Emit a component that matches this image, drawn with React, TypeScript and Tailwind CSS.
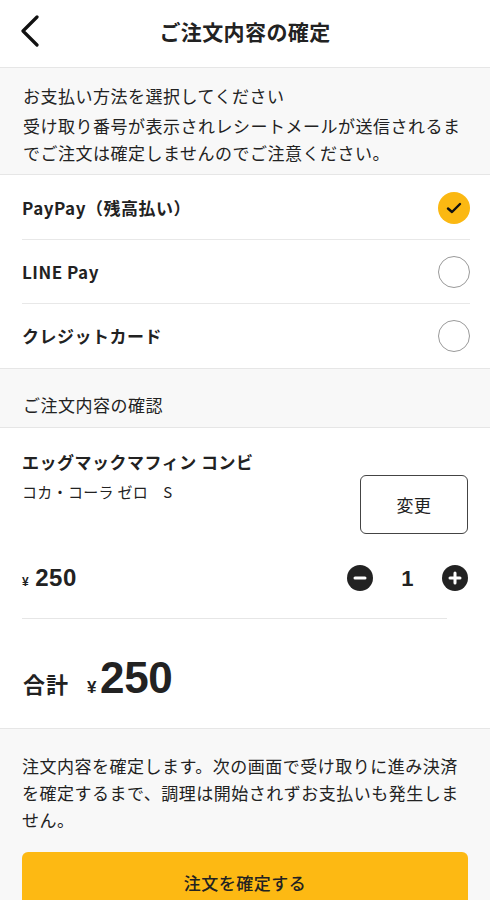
const jp = { fontFamily: '"Noto Sans CJK JP", "Noto Sans", sans-serif' };
const num = { fontFamily: '"Liberation Sans", Arial, sans-serif' };

function Radio({ checked }: { checked?: boolean }) {
  if (checked) {
    return (
      <div className="w-8 h-8 rounded-full bg-[#fbb812] flex items-center justify-center">
        <svg width="16" height="12" viewBox="0 0 16 12">
          <path d="M2 6.5 L6 10 L14 2" fill="none" stroke="#111" strokeWidth="2.4" strokeLinecap="round" strokeLinejoin="round" />
        </svg>
      </div>
    );
  }
  return <div className="w-8 h-8 rounded-full border-[1.5px] border-[#9a9a9a] bg-white" />;
}

function RoundBtn({ plus }: { plus?: boolean }) {
  return (
    <div className="w-[26px] h-[26px] rounded-full bg-[#222] flex items-center justify-center">
      <svg width="14" height="14" viewBox="0 0 14 14">
        <path d="M2 7 H12" stroke="#fff" strokeWidth="3" strokeLinecap="round" />
        {plus && <path d="M7 2 V12" stroke="#fff" strokeWidth="3" strokeLinecap="round" />}
      </svg>
    </div>
  );
}

export default function App() {
  const methods = [
    { name: "PayPay（残高払い）", checked: true },
    { name: "LINE Pay", checked: false },
    { name: "クレジットカード", checked: false },
  ];

  return (
    <div className="w-[490px] h-[900px] overflow-hidden bg-white text-[#222] tracking-[0.5px]" style={jp}>
      {/* Header */}
      <div className="relative h-[68px] border-b border-[#e6e6e6] flex items-center justify-center">
        <div className="absolute left-[20px] top-[15px]">
          <svg width="20" height="32" viewBox="0 0 20 32">
            <path d="M17 2 L3 16 L17 30" fill="none" stroke="#111" strokeWidth="3.2" strokeLinecap="round" strokeLinejoin="round" />
          </svg>
        </div>
        <h1 className="text-[21px] font-bold leading-none tracking-[0.4px] -mt-[5px]">ご注文内容の確定</h1>
      </div>

      {/* Notice */}
      <div className="bg-[#f8f8f8] px-[23px] pt-[14px] pb-[8px] border-b border-[#e6e6e6] text-[17px]">
        <p className="leading-[28px]">お支払い方法を選択してください</p>
        <p className="leading-[27px] mt-[2px]">
          受け取り番号が表示されレシートメールが送信されるまでご注文は確定しませんのでご注意ください。
        </p>
      </div>

      {/* Payment methods */}
      <div className="pl-[22px] pr-[20px] pt-[1px]">
        {methods.map((m, i) => (
          <div
            key={m.name}
            className={
              i < methods.length - 1
                ? "h-[64px] flex items-center justify-between border-b border-[#e8e8e8]"
                : "h-[64px] flex items-center justify-between"
            }
          >
            <span className="text-[17px] font-bold">{m.name}</span>
            <Radio checked={m.checked} />
          </div>
        ))}
      </div>

      {/* Section title */}
      <div className="bg-[#f8f8f8] border-y border-[#e6e6e6] px-[23px] pt-[24px] pb-[10px]">
        <p className="text-[17px] leading-[24px]">ご注文内容の確認</p>
      </div>

      {/* Item */}
      <div className="px-[22px] pt-[22px]">
        <div className="flex justify-between items-start">
          <div>
            <p className="text-[17px] font-bold leading-[24px]">エッグマックマフィン コンビ</p>
            <p className="text-[15px] leading-[20px] mt-[8px] tracking-[0.3px]">コカ・コーラ ゼロ　S</p>
          </div>
          <button className="mt-[25px] w-[108px] h-[59px] border-[1.5px] border-[#444] rounded-[6px] text-[17px] bg-white">
            変更
          </button>
        </div>
        <div className="mt-[30px] h-[28px] flex items-center justify-between">
          <div className="flex items-baseline gap-[6px]" style={num}>
            <span className="text-[12px] font-bold">¥</span>
            <span className="text-[24px] font-bold tracking-[0.5px]">250</span>
          </div>
          <div className="flex items-center">
            <RoundBtn />
            <span className="w-[69px] text-center text-[22px] font-bold" style={num}>1</span>
            <RoundBtn plus />
          </div>
        </div>
        <div className="mt-[26px] mr-[21px] border-b border-[#e6e6e6]" />
      </div>

      {/* Total */}
      <div className="h-[110px] px-[23px] flex items-center border-b border-[#e6e6e6]">
        <div className="flex items-baseline mt-[10px]">
          <span className="text-[22px] font-bold tracking-[1px]">合計</span>
          <span className="text-[17px] font-bold ml-[18px] mr-[3px]" style={num}>¥</span>
          <span className="text-[44px] font-bold leading-none tracking-[-0.3px]" style={num}>250</span>
        </div>
      </div>

      {/* Footer */}
      <div className="bg-[#f8f8f8] px-[22px] pt-[23px] pb-[20px]">
        <p className="text-[17px] leading-[27px]">
          注文内容を確定します。次の画面で受け取りに進み決済を確定するまで、調理は開始されずお支払いも発生しません。
        </p>
        <button className="mt-[19px] w-full h-[62px] rounded-[6px] bg-[#fdb913] text-[17px] font-medium text-[#222]">
          注文を確定する
        </button>
      </div>
    </div>
  );
}
